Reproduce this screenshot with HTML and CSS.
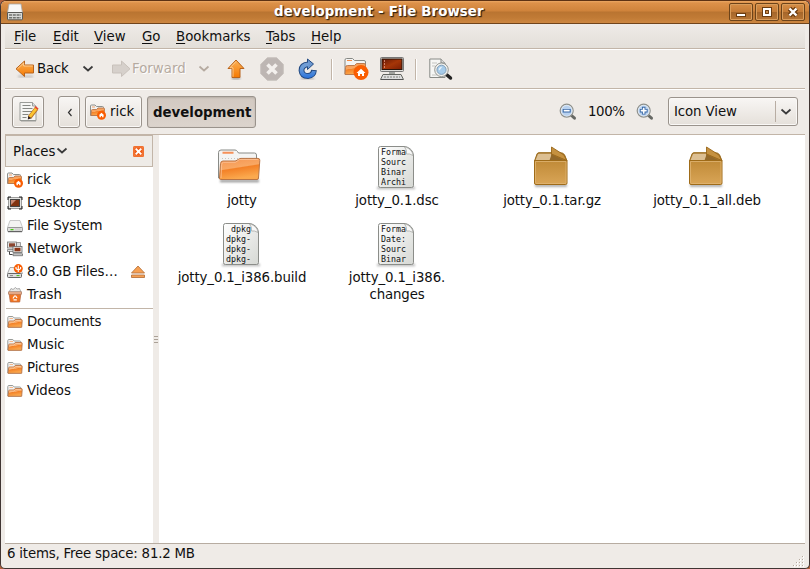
FILE: index.html
```html
<!DOCTYPE html>
<html lang="en">
<head>
<meta charset="utf-8">
<title>development - File Browser</title>
<link rel="stylesheet" href="styles.css">
</head>
<body>
<svg class="defs" width="0" height="0" aria-hidden="true">
  <defs>
    <linearGradient id="orange" x1="0" y1="0" x2="0" y2="1"><stop offset="0" stop-color="#fbb25a"/><stop offset="1" stop-color="#f57900"/></linearGradient>
    <linearGradient id="folder" x1="0" y1="0" x2="0.3" y2="1"><stop offset="0" stop-color="#f59450"/><stop offset=".5" stop-color="#f8a864"/><stop offset=".55" stop-color="#f38127"/><stop offset="1" stop-color="#fba94e"/></linearGradient>
    <linearGradient id="paper" x1="0" y1="0" x2="1" y2="1"><stop offset="0" stop-color="#fff"/><stop offset="1" stop-color="#d6d8d4"/></linearGradient>
    <linearGradient id="box" x1="0" y1="0" x2="0" y2="1"><stop offset="0" stop-color="#c08a37"/><stop offset="1" stop-color="#d9a557"/></linearGradient>
    <linearGradient id="screen" x1="0" y1="0" x2="1" y2="1"><stop offset="0" stop-color="#651703"/><stop offset=".5" stop-color="#a63608"/><stop offset="1" stop-color="#7b1d03"/></linearGradient>
    <linearGradient id="blue" x1="0" y1="0" x2="0" y2="20" gradientUnits="userSpaceOnUse"><stop offset="0" stop-color="#7ca3d4"/><stop offset=".5" stop-color="#6b9bd6"/><stop offset="1" stop-color="#2a73dc"/></linearGradient>
    <filter id="soft" filterUnits="userSpaceOnUse" x="0" y="0" width="48" height="48"><feGaussianBlur stdDeviation=".8"/></filter>
  </defs>
  <symbol id="i-folder16" viewBox="0 0 16 16">
    <path d="M.8 13V3.500q0-1 1-1h4l1.500 1.500h5.500q1 0 1 1V13z" fill="#f1f1f1" stroke="#999b97"/>
    <path d="M2.500 4.500h3.500" stroke="#f6b98c"/>
    <path d="M1 13.300l.7-5.300q0-1 1-1h4l1.500-1.500h6q1 0 1 1l-.5 6.800z" fill="url(#folder)" stroke="#b9764a" stroke-width=".9"/>
    <path d="M2.300 8.100h4.800l1.400-1.500h5.400" stroke="#fbd0a8" stroke-width=".8" fill="none"/>
  </symbol>
  <symbol id="i-home16" viewBox="0 0 16 16">
    <path d="M.5 11.500V2q0-1 1-1h3.500l1.500 1.500h6q1 0 1 1V11.500z" fill="#f1f1f1" stroke="#8e908c"/>
    <path d="M2 3h3" stroke="#f6a56c"/>
    <path d="M1 11.500l.5-5q0-1 1-1h4l1.500-1.500h5.500q1 0 1 1l-.5 6.500z" fill="url(#folder)" stroke="#b9764a" stroke-width=".9"/>
    <circle cx="11.500" cy="11.300" r="4.500" fill="#f95d02"/>
    <path d="M11.500 8.700l2.700 2.600h-.7v2h-1.400v-1.300h-1.200v1.300H9.500v-2h-.7z" fill="#fff"/>
  </symbol>
  <symbol id="i-desktop" viewBox="0 0 16 16">
    <rect x="1.500" y="2.500" width="13" height="11" fill="#e4e4e2" stroke="#888" stroke-width=".8"/>
    <rect x="3.500" y="4.500" width="9" height="7" fill="#813311" stroke="#444"/>
    <path d="M4 5h5l-5 5z" fill="#c88c78"/>
    <path d="M1 5V2h3M12 2h3v3M15 11v3h-3M4 14H1v-3" fill="none" stroke="#222"/>
  </symbol>
  <symbol id="i-drive" viewBox="0 0 16 16">
    <path d="M3 2.500h10l2.500 7H.5z" fill="#f3f3f2" stroke="#bbb" stroke-width=".8"/>
    <rect x=".5" y="9.500" width="15" height="4" rx=".8" fill="#dededc" stroke="#888" stroke-width=".8"/>
    <path d="M1 13.700h14" stroke="#555"/>
    <path d="M3.500 11.600h3" stroke="#44cc10" stroke-width="1.300"/><path d="M9 10.500v2M11 10.500v2M13 10.500v2" stroke="#bbb" stroke-width=".7"/>
  </symbol>
  <symbol id="i-network" viewBox="0 0 16 16">
    <path d="M9.500 1.500h4v5h-4z" fill="#ddd" stroke="#888" stroke-width=".8"/>
    <rect x=".5" y="1" width="9" height="6" fill="#e4e4e2" stroke="#777" stroke-width=".8"/><rect x="2" y="2.300" width="6" height="3.500" fill="#8c4630"/>
    <path d="M.5 8.500h8v2h-8z" fill="#ddd" stroke="#777" stroke-width=".8"/>
    <rect x="6" y="5.500" width="9" height="6" fill="#e4e4e2" stroke="#666" stroke-width=".8"/><rect x="7.500" y="6.800" width="6" height="3.500" fill="#8d3719"/>
    <path d="M6 12.800h9.500v1.900H6z" fill="#ddd" stroke="#666" stroke-width=".8"/><path d="M2.500 10.500v3h3" stroke="#444" fill="none"/>
  </symbol>
  <symbol id="i-usb" viewBox="0 0 16 16">
    <path d="M3 3.500h10l2.500 6H.5z" fill="#f3f3f2" stroke="#999" stroke-width=".8"/>
    <rect x=".5" y="9.500" width="14" height="4" rx="1" fill="#ddd" stroke="#666"/>
    <path d="M3 11.600h3" stroke="#888"/><path d="M9.500 11.600h3" stroke="#44bb10"/>
    <circle cx="11.300" cy="4.600" r="4.500" fill="#f95d02"/>
    <path d="M11.300 1.500v6.500M9 3v1.700l2.300 1.500 2.300-1.500V3" fill="none" stroke="#fff" stroke-width="1.100"/>
  </symbol>
  <symbol id="i-trash" viewBox="0 0 16 16">
    <path d="M2 5l2-3.500 2 1 2.500-2 1.500 1.500 2.500-.5L14 5z" fill="#e7e7e5" stroke="#999" stroke-width=".8"/>
    <path d="M2 5.500h12l-1.300 9.500H3.300z" fill="#f4741e" stroke="#ba6840" stroke-width=".8"/>
    <path d="M1.500 4.800h13v2.400h-13z" fill="#f5b690" stroke="#a87860" stroke-width=".7"/>
    <path d="M6 11.500l1.500-2.500h1.200l1.300 2M9.800 12.800H6.500" fill="none" stroke="#fff" stroke-width="1.200"/>
  </symbol>
  <symbol id="i-doc" viewBox="0 0 48 48">
    <path d="M5 44h38" stroke="#555" stroke-width="2.500" opacity=".4" filter="url(#soft)"/>
    <path d="M6.500 4.500q0-2 2-2H33.500q7 2 8 8.500V41.500q0 2-2 2h-31q-2 0-2-2z" fill="url(#paper)" stroke="#8b8d89"/>
    <path d="M32.500 3q2.500 2.500 2 7 3-.7 6.500 1.500-1-7-8.500-8.500z" fill="#f8f8f8" stroke="#a9aba7" stroke-width=".8"/>
  </symbol>
  <symbol id="i-box" viewBox="0 0 48 48">
    <path d="M8 41.500h32" stroke="#333" stroke-width="2.500" opacity=".45" filter="url(#soft)"/>
    <path d="M7.500 17l2.500-7q.5-1.300 2-1.300h21q3 0 4.500 2l2.500 6.300z" fill="#a97a30" stroke="#9b6b1c"/>
    <path d="M8.500 16.300l2.300-5.800q.3-.8 1.200-.8h12v4.500l-1.500 2.100z" fill="#dcbf92"/>
    <path d="M24.500 10.500l13 6H22.500z" fill="#93692a"/>
    <path d="M24.500 3l12.500 8 2.700 5.500L24.500 10z" fill="#c59140" stroke="#98661a" stroke-width=".9"/>
    <path d="M7.500 16.500h32.500V39q0 1.500-1.500 1.500H9q-1.500 0-1.500-1.500z" fill="url(#box)" stroke="#9f6b18"/>
    <path d="M8.500 17.500h30.500V38.500q0 1-1 1H9.500q-1 0-1-1z" fill="none" stroke="#e0b574" stroke-width=".8"/>
  </symbol>
  <symbol id="i-chev" viewBox="0 0 12 8"><path d="M1.500 1.500l4.500 4 4.500-4" fill="none" stroke="currentColor" stroke-width="1.700"/></symbol>
  <symbol id="i-mag" viewBox="0 0 18 18">
    <path d="M12.500 12.500l3 2.700" stroke="#666864" stroke-width="3" stroke-linecap="round"/>
    <circle cx="7.700" cy="7.700" r="6.500" fill="#eef2f6" stroke="#8e908c" stroke-width="1.200"/>
    <circle cx="7.700" cy="7.700" r="5.200" fill="#b8d1ef" stroke="#d4e2f3" stroke-width=".7"/>
  </symbol>
</svg>

<div class="window">
  <header class="titlebar">
    <svg class="app-icon" width="16" height="18" viewBox="0 0 16 18"><path d="M2 1h12l1.500 9H.5z" fill="#f8f8f7" stroke="#aaa" stroke-width=".8"/><path d="M.5 9.500h15V16q0 .8-1 .8h-13q-1 0-1-.8z" fill="#d9dad7" stroke="#5b5b57"/><path d="M2 12h12M2 14.700h12" stroke="#70726e" stroke-width="1.600" stroke-dasharray="3 .8"/></svg>
    <h1>development - File Browser</h1>
    <div class="controls">
      <button aria-label="Minimize"><svg width="22" height="17" viewBox="0 0 22 17"><rect x="6" y="9" width="10" height="4" fill="#6b3c10"/><path d="M7 11h8" stroke="#fff" stroke-width="2"/></svg></button>
      <button aria-label="Maximize"><svg width="22" height="17" viewBox="0 0 22 17"><rect x="6" y="3" width="10" height="10" fill="#6b3c10"/><path d="M8 5h6v6H8z" fill="#b87a3c" stroke="#fff" stroke-width="2"/><path d="M9.500 6.500h3v3h-3z" fill="#c98b4c" stroke="#6b3c10"/></svg></button>
      <button aria-label="Close"><svg width="22" height="17" viewBox="0 0 22 17"><path d="M7.500 4.500l7 7m0-7l-7 7" stroke="#6b3c10" stroke-width="4.800"/><path d="M7.500 4.500l7 7m0-7l-7 7" stroke="#fff" stroke-width="2.400"/></svg></button>
    </div>
  </header>

  <nav class="menubar">
    <span class="file"><u>F</u>ile</span><span class="edit-menu"><u>E</u>dit</span><span class="view"><u>V</u>iew</span><span class="go"><u>G</u>o</span><span class="marks"><u>B</u>ookmarks</span><span class="tabs"><u>T</u>abs</span><span><u>H</u>elp</span>
  </nav>

  <div class="toolbar">
    <svg class="back" width="20" height="18" viewBox="0 0 20 18"><path d="M3 16.500h15" stroke="#555" stroke-width="2" opacity=".3" filter="url(#soft)"/><path d="M1 8.800L9.500 1v4H18.500v8H9.500v3.500z" fill="url(#orange)" stroke="#b8631b" stroke-linejoin="round"/><path d="M2.500 8.800L8.700 3v3h9" fill="none" stroke="#fdd5a3" stroke-width=".8"/></svg>
    <span class="back-label">Back</span>
    <svg class="chev c1" width="12" height="8"><use href="#i-chev"/></svg>
    <svg class="forward" width="20" height="18" viewBox="0 0 20 18"><path d="M19 8.800L10.500 1v4H1.500v8h9v3.500z" fill="#d6d0cb" stroke="#c8c1bb" stroke-linejoin="round"/></svg>
    <span class="forward-label">Forward</span>
    <svg class="chev c2" width="12" height="8"><use href="#i-chev"/></svg>
    <svg class="up" width="18" height="21" viewBox="0 0 18 21"><path d="M5 19.300h8" stroke="#333" stroke-width="2" opacity=".5" filter="url(#soft)"/><path d="M9 1L17 9.500h-4V18.500H5V9.500H1z" fill="url(#orange)" stroke="#b8631b" stroke-linejoin="round"/><path d="M9 2.500L3 8.800h3v9" fill="none" stroke="#fdd5a3" stroke-width=".8"/></svg>
    <svg class="stop" width="24" height="24" viewBox="0 0 24 24"><path d="M7.300.7h9.400l6.600 6.600v9.400l-6.600 6.600H7.300L.7 16.700V7.300z" fill="#bdb6b3" stroke="#c9c3bf"/><path d="M7.500 7.500l9 9m0-9l-9 9" stroke="#f3f0ed" stroke-width="3.600"/></svg>
    <svg class="reload" width="20" height="22" viewBox="0 0 20 22"><path d="M3 20.500h13" stroke="#333" stroke-width="2" opacity=".3" filter="url(#soft)"/><path d="M10.500 6.300Q3.500 6.500 3.500 12.500 4 18 10 18 15.500 17.500 16 12" fill="none" stroke="#234a82" stroke-width="5.800"/><path d="M9.500 1L15.500 6 9.500 11.500z" fill="#6b97cf" stroke="#234a82" stroke-linejoin="round"/><path d="M10.800 6.300Q3.500 6.500 3.500 12.500 4 18 10 18 15.300 17.500 16 13" fill="none" stroke="url(#blue)" stroke-width="3.800"/></svg>
    <i class="sep s1"></i>
    <svg class="home" width="25" height="24" viewBox="0 0 25 24"><path d="M1 17V3q0-1.500 1.500-1.500h6L10.500 3.500H20q1.500 0 1.500 1.500v12z" fill="#f4f4f3" stroke="#868884"/><path d="M3 3.500h5" stroke="#f58a43"/><path d="M1 17.500l.5-7q0-2 2-2h7L12.500 6.500H20q1.500 0 1.500 1.500L20.500 17.500z" fill="url(#folder)" stroke="#bc7a4e"/><circle cx="17" cy="15.500" r="7.500" fill="#fa5e02"/><path d="M17 11.700l4.500 4.300H20v3h-2v-2h-2v2h-2v-3h-1.500z" fill="#fff"/></svg>
    <svg class="computer" width="24" height="24" viewBox="0 0 24 24"><rect x=".5" y=".5" width="23" height="14" rx="1" fill="#dededb" stroke="#777"/><rect x="2" y="2" width="20" height="10.500" fill="url(#screen)" stroke="#2c1409"/><path d="M4 4h1M4 7h1M4 10h1" stroke="#e7a186" stroke-width="1.500"/><path d="M9 15h6v3H9z" fill="#a2a4a0"/><path d="M3 17.500h18l2.500 5H.5z" fill="#ddd" stroke="#646660"/><path d="M4 20h16" stroke="#80827d" stroke-dasharray="2 1"/><path d="M1 22.500h22" stroke="#555"/></svg>
    <i class="sep s2"></i>
    <svg class="search" width="24" height="23" viewBox="0 0 24 23"><path d="M.8 1h11.200l4 4v14.500H.8z" fill="#f6f6f4" stroke="#888a86"/><path d="M12 1v4h4" fill="#ddd" stroke="#888a86"/><path d="M3 5h5M3 8h3M3 17h5" stroke="#c3c4c1"/><path d="M18 17l3.500 3" stroke="#222" stroke-width="3.500" stroke-linecap="round"/><circle cx="12.500" cy="11.800" r="5.600" fill="#a6cbe9" stroke="#f1f1ee" stroke-width="2.200"/><circle cx="12.500" cy="11.800" r="6.800" fill="none" stroke="#898b87" stroke-width=".9"/><circle cx="12.500" cy="11.800" r="4.600" fill="none" stroke="#6f8fad" stroke-width=".8"/><path d="M9.500 11q1-2.500 4-2.500l-3 4z" fill="#e5f1fb"/></svg>
  </div>

  <div class="location">
    <button class="btn edit"><svg width="22" height="22" viewBox="0 0 22 22"><path d="M2 1.500h12.500L18 5v14.500H2z" fill="#f5f5f3" stroke="#9a9c98"/><path d="M14.500 1.500V5H18" fill="#ddd" stroke="#9a9c98"/><path d="M4.500 4.500h8M4.500 7.500h10M4.500 10.500h10M4.500 13.500h6M4.500 16.500h4" stroke="#858783"/><path d="M3 20.300h15" stroke="#777" opacity=".4"/><path d="M11.500 16.500l7-9" stroke="#b4722b" stroke-width="4.400"/><path d="M11.700 16l6.400-8.300" stroke="#fcc430" stroke-width="2.800"/><path d="M18 7.500l1-1.300" stroke="#e8442c" stroke-width="4"/><path d="M9.800 18.500l.4-3.500 3.200 2.300z" fill="#322"/></svg></button>
    <button class="btn prev"><svg width="6" height="9" viewBox="0 0 6 9"><path d="M4.500 1L1.500 4.500l3 3.500" fill="none" stroke="#333" stroke-width="1.200"/></svg></button>
    <button class="btn rick"><svg width="16" height="16"><use href="#i-home16"/></svg><span>rick</span></button>
    <button class="btn current"><span>development</span></button>
    <svg class="zoom-out" width="18" height="18" viewBox="0 0 18 18"><use href="#i-mag"/><path d="M3.700 7.700h8" stroke="#3465a4" stroke-width="3.600"/><path d="M4.700 7.700h6" stroke="#fff" stroke-width="1.700"/></svg>
    <span class="percent">100%</span>
    <svg class="zoom-in" width="18" height="18" viewBox="0 0 18 18"><use href="#i-mag"/><path d="M3.800 7.700h7.800M7.700 3.800v7.800" stroke="#3465a4" stroke-width="3.500"/><path d="M4.700 7.700h6M7.700 4.700v6" stroke="#fff" stroke-width="1.700"/></svg>
    <div class="select"><span>Icon View</span><i></i><svg class="chev" width="12" height="8"><use href="#i-chev"/></svg></div>
  </div>

  <main>
    <aside>
      <div class="places"><span>Places</span><svg class="chev" width="12" height="8"><use href="#i-chev"/></svg><svg class="close" width="11" height="11" viewBox="0 0 11 11"><rect width="11" height="11" rx="1.500" fill="#ee5d16"/><rect x="1" y="1" width="9" height="9" fill="none" stroke="#f79561" stroke-width=".7"/><path d="M2.700 2.700l5.600 5.600m0-5.600L2.700 8.300" stroke="#fff" stroke-width="1.900"/></svg></div>
      <ul>
        <li><svg><use href="#i-home16"/></svg><span>rick</span></li>
        <li><svg><use href="#i-desktop"/></svg><span>Desktop</span></li>
        <li><svg><use href="#i-drive"/></svg><span>File System</span></li>
        <li><svg><use href="#i-network"/></svg><span>Network</span></li>
        <li><svg><use href="#i-usb"/></svg><span>8.0 GB Files…</span><svg class="eject" viewBox="0 0 16 16"><path d="M8 2l6.500 7h-13zM1.500 11h13v2.500h-13z" fill="#f7a052" stroke="#b87541" stroke-width=".9" stroke-linejoin="round"/></svg></li>
        <li><svg><use href="#i-trash"/></svg><span>Trash</span></li>
      </ul>
      <ul class="bookmarks">
        <li><svg><use href="#i-folder16"/></svg><span class="documents">Documents</span></li>
        <li><svg><use href="#i-folder16"/></svg><span>Music</span></li>
        <li><svg><use href="#i-folder16"/></svg><span>Pictures</span></li>
        <li><svg><use href="#i-folder16"/></svg><span>Videos</span></li>
      </ul>
    </aside>
    <div class="splitter"><i></i><i></i><i></i></div>
    <section class="files">
      <figure>
        <svg class="big-folder" width="48" height="48" viewBox="0 0 48 48"><path d="M5 37h39" stroke="#333" stroke-width="2.500" opacity=".5" filter="url(#soft)"/><path d="M3.500 34V8.500q0-2.500 2.500-2.500h14q1.500 0 2.500 1.500l1 1.500h16q2 0 2 2V34z" fill="#f4f4f3" stroke="#898b87"/><path d="M7.500 8.700h11" stroke="#f69058" stroke-width="2"/><path d="M7 14.500h31" stroke="#c5c6c3" stroke-dasharray="1 2"/><path d="M5.500 35.500q-1 0-1-1.500L5.500 19.500q.2-2.500 2.500-2.500h12q1 0 2-.8l2-1.200q1-.6 2-.6h17q2 0 1.800 2L43.500 34q0 1.500-1.500 1.500z" fill="url(#folder)" stroke="#b87546"/><path d="M6 34l.7-13.500q.1-2.200 1.800-2.200h12l4-2.800h18.300" fill="none" stroke="#fbc49b" stroke-width=".8"/></svg>
        <figcaption>jotty</figcaption>
      </figure>
      <figure>
        <div class="doc"><svg width="48" height="48"><use href="#i-doc"/></svg><pre>Forma
Sourc
Binar
Archi</pre></div>
        <figcaption>jotty_0.1.dsc</figcaption>
      </figure>
      <figure>
        <svg width="48" height="48"><use href="#i-box"/></svg>
        <figcaption>jotty_0.1.tar.gz</figcaption>
      </figure>
      <figure>
        <svg width="48" height="48"><use href="#i-box"/></svg>
        <figcaption>jotty_0.1_all.deb</figcaption>
      </figure>
      <figure>
        <div class="doc"><svg width="48" height="48"><use href="#i-doc"/></svg><pre> dpkg
dpkg-
dpkg-
dpkg-</pre></div>
        <figcaption>jotty_0.1_i386.build</figcaption>
      </figure>
      <figure>
        <div class="doc"><svg width="48" height="48"><use href="#i-doc"/></svg><pre>Forma
Date:
Sourc
Binar</pre></div>
        <figcaption>jotty_0.1_i386.<br>changes</figcaption>
      </figure>
    </section>
  </main>
  <footer><span>6 items, Free space: 81.2 MB</span><svg class="grip" width="12" height="12" viewBox="0 0 12 12"><path d="M10 1h1M7 4h1M10 4h1M4 7h1M7 7h1M10 7h1M1 10h1M4 10h1M7 10h1M10 10h1" stroke="#fff" stroke-width="2"/><path d="M9 .5h1M6 3.500h1M9 3.500h1M3 6.500h1M6 6.500h1M9 6.500h1M0 9.500h1M3 9.500h1M6 9.500h1M9 9.500h1" stroke="#b5aa9e"/></svg></footer>
</div>
</body>
</html>
```
FILE: styles.css
```css
* { box-sizing: border-box; }
body { margin: 0; width: 810px; height: 569px; overflow: hidden; background: #b5613c; color: #101010; font: 13.33px/17px "DejaVu Sans", sans-serif; }
.defs { position: absolute; }
svg { display: block; flex: none; }
button { font: inherit; color: inherit; padding: 0; }
span { white-space: nowrap; flex: none; }
u { text-underline-offset: 2px; text-decoration-thickness: 1px; }

.window { width: 810px; height: 569px; display: flex; flex-direction: column; background: #efebe7; border: 1px solid #403533; border-top-color: #5d3213; border-radius: 6px 6px 5px 5px; overflow: hidden; }

.titlebar { height: 23px; flex: none; display: flex; align-items: center; background: linear-gradient(#eba864 0, #dd9149 2px, #cf833b 10px, #b97431 11px, #c17b36 17px, #cd8741 22px); border-bottom: 1px solid #70441b; }
.app-icon { margin: 0 0 0 6px; }
h1 { margin: 0; padding-left: 251px; flex: 1; color: #fff; font-size: 13.33px; line-height: 20px; letter-spacing: .11px; white-space: nowrap; text-shadow: 1px 1px 1px #3a2814, 1px 1px 1px #3a2814; }
.controls { display: flex; gap: 2px; padding-right: 4px; }
.controls button { width: 24px; height: 18px; border: 1px solid #6d4319; border-radius: 2px; background: linear-gradient(#d68d46, #c47b36 48%, #a5662a 52%, #b97635); box-shadow: inset 0 0 0 1px #d99d5c; }

.menubar { height: 25px; flex: none; display: flex; align-items: center; margin: 0 4px; padding-left: 9px; background: linear-gradient(#efebe7, #e3dfd9); border-bottom: 1px solid #c2b5a8; }
.menubar .file { width: 39px; }
.menubar .edit-menu { width: 41px; }
.menubar .view { width: 48px; }
.menubar .go { width: 34px; }
.menubar .marks { width: 90px; }
.menubar .tabs { width: 45px; }

.toolbar { height: 40px; flex: none; display: flex; align-items: center; margin: 0 4px; border-top: 1px solid #fff; border-bottom: 1px solid #c2b5a8; }
.toolbar span { padding-bottom: 2px; }
.back { margin-left: 10px; }
.back-label { width: 31px; margin-left: 2px; letter-spacing: -.2px; }
.c1 { margin-left: 14px; }
.chev { color: #3a3a3a; }
.forward { margin-left: 17px; }
.forward-label { width: 52px; margin-left: 1px; color: #b5aaa0; text-shadow: 1px 1px #fff; }
.c2 { margin-left: 14px; color: #b5aaa0; }
.up { margin-left: 17px; }
.stop { margin-left: 15px; }
.reload { margin-left: 14px; }
.sep { flex: none; width: 2px; height: 21px; background: #c2b5a8; border-right: 1px solid #fff; }
.s1 { margin-left: 13px; }
.home { margin-left: 11px; }
.computer { margin-left: 11px; }
.s2 { margin-left: 11px; }
.search { margin-left: 12px; }

.location { height: 46px; flex: none; display: flex; align-items: center; margin: 0 4px; border-top: 1px solid #fff; border-bottom: 1px solid #c2b5a8; }
.btn { flex: none; height: 32px; display: flex; align-items: center; border: 1px solid #9a938c; border-radius: 3px; background: linear-gradient(#f8f6f4, #e5e0da); box-shadow: inset 0 0 0 1px #faf8f6; }
.edit { width: 32px; margin-left: 7px; padding-left: 5px; }
.prev { width: 22px; margin-left: 14px; padding-left: 8px; }
.rick { width: 57px; margin-left: 5px; padding-left: 4px; }
.rick span { margin-left: 4px; padding-bottom: 2px; }
.current { width: 109px; margin-left: 5px; padding-left: 5px; background: linear-gradient(#d2c9c1, #dcd4cd); box-shadow: inset 0 1px 2px #b8aea6; font-weight: bold; }
.zoom-out { margin-left: 303px; }
.percent { width: 36px; margin-left: 11px; padding-bottom: 2px; letter-spacing: -.4px; }
.zoom-in { margin-left: 12px; }
.select { width: 130px; height: 29px; margin-left: 14px; margin-top: -1px; display: flex; align-items: center; border: 1px solid #9a938c; border-radius: 3px; background: linear-gradient(#f8f6f4, #e5e0da); box-shadow: inset 0 0 0 1px #faf8f6; }
.select span { width: 106px; padding-left: 5px; letter-spacing: -.1px; }
.select i { width: 1px; height: 21px; background: #b8ada3; margin-right: 4px; }

main { flex: 1; min-height: 0; display: flex; margin: 0 4px; }
aside { width: 148px; background: #fff; }
.places { height: 32px; display: flex; align-items: center; background: #eeebe7; border: 1px solid #c2b5a8; padding-left: 7px; margin-bottom: 1px; }
.places .chev { margin-left: 1px; }
.places .close { margin-left: auto; margin-right: 8px; }
ul { margin: 0; padding: 0; list-style: none; }
li { height: 23px; display: flex; align-items: center; padding-left: 2px; }
li svg { width: 16px; height: 16px; }
li span { margin-left: 4px; letter-spacing: -.08px; }
.documents { letter-spacing: -.2px; }
li .eject { margin-left: auto; margin-right: 7px; }
.bookmarks { margin: 2px 0 0 1px; border-top: 1px solid #c2b5a8; padding-top: 1px; }
.bookmarks li { padding-left: 1px; }
.splitter { width: 6px; display: flex; flex-direction: column; align-items: center; justify-content: center; gap: 2px; background: #efebe7; }
.splitter i { width: 4px; height: 1px; background: #aaa197; }
.files { flex: 1; background: #fff; display: grid; grid-template-columns: repeat(4, 155px); grid-auto-rows: 77px; align-content: start; padding: 9px 0 0 5px; }
figure { margin: 0; display: flex; flex-direction: column; align-items: center; }
figure > svg, .doc { margin-right: 1px; }
figure > .big-folder { margin-right: 5px; }
figcaption { padding-left: 1px; text-align: center; line-height: 17px; letter-spacing: -.12px; white-space: nowrap; }
.doc { position: relative; width: 48px; height: 48px; }
.doc pre { position: absolute; left: 9px; top: 3px; margin: 0; width: 28px; height: 40px; overflow: hidden; font: 8.3px/10px "DejaVu Sans Mono", monospace; }

footer { height: 25px; flex: none; display: flex; align-items: center; margin: 0 4px; padding-left: 2px; border-top: 1px solid #b7aca1; }
footer span { padding-bottom: 6px; letter-spacing: -.19px; }
.grip { margin-left: auto; margin-top: 11px; }
```
